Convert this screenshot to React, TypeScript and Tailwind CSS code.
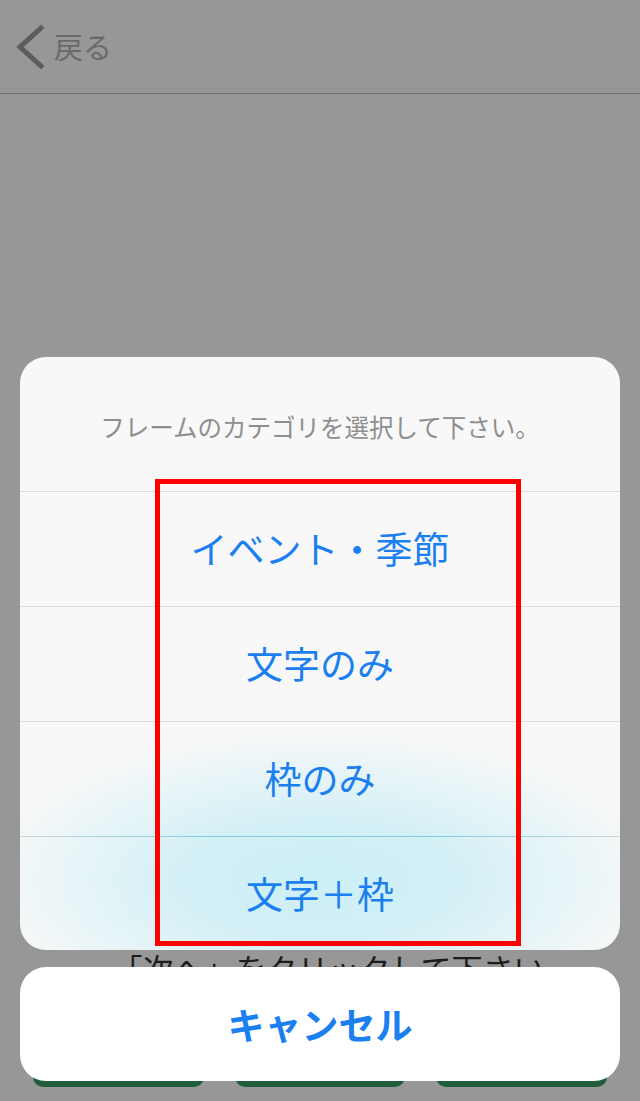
import React from "react";

const blue = "text-[#1a7ff0]";

const options = ["イベント・季節", "文字のみ", "枠のみ", "文字＋枠"];

const BackChevron = () => (
  <svg width="30" height="46" viewBox="0 0 30 46" fill="none">
    <path d="M26 4 L5 23 L26 42" stroke="#5c5c5c" strokeWidth="5" strokeLinecap="square" strokeLinejoin="miter" />
  </svg>
);

const App = () => {
  return (
    <div className="relative h-[1101px] w-full overflow-hidden bg-[#979797] font-['Noto_Sans_CJK_JP','Noto_Sans',sans-serif]">
      {/* dimmed page behind the sheet */}
      <div className="flex h-[94px] items-center gap-[9px] border-b border-[#6f6f6f] pl-[15px]">
        <BackChevron />
        <span className="text-[29px] leading-none text-[#6a6a6a]">戻る</span>
      </div>
      <div className="mt-[858px] pl-[16px] text-center text-[31px] leading-none text-[#1c1c1c]">
        「次へ」をクリックして下さい
      </div>
      <div className="mt-[24px] grid grid-cols-3 gap-[31px] px-[33px]">
        <div className="h-[80px] rounded-[10px] bg-[#215e3e]" />
        <div className="h-[80px] rounded-[10px] bg-[#215e3e]" />
        <div className="h-[80px] rounded-[10px] bg-[#215e3e]" />
      </div>

      {/* action sheet */}
      <div className="absolute inset-0 flex flex-col justify-end gap-[17px] px-[20px] pb-[20px]">
        <div className="relative overflow-hidden rounded-[26px] bg-[#f8f8f8]">
          <div className="pointer-events-none absolute left-[-40px] top-[373px] h-[300px] w-[680px] bg-[radial-gradient(closest-side,#cdeff6_0%,#d3f0f6_40%,#d3f0f600_100%)]" />
          <div className="relative flex h-[134px] items-center justify-center pt-[6px] text-[24.5px] leading-none text-[#8e8e8e]">
            フレームのカテゴリを選択して下さい。
          </div>
          {options.map((label, i) => (
            <div
              key={label}
              className={
                "relative flex items-center justify-center text-[37px] leading-none " +
                blue +
                (i === options.length - 1 ? " h-[114px]" : " h-[115px]")
              }
            >
              {i === options.length - 1 ? (
                <div className="absolute left-0 right-0 top-0 h-px bg-[linear-gradient(90deg,#d0d6da,#7ccfdc_30%,#7ccfdc_70%,#d0d6da)]" />
              ) : (
                <div className="absolute left-0 right-0 top-0 h-px bg-[#dcdcdc]" />
              )}
              {label}
            </div>
          ))}
        </div>
        <div className={"flex h-[114px] items-center justify-center rounded-[26px] bg-white text-[37px] font-bold leading-none " + blue}>
          キャンセル
        </div>
      </div>

      {/* red annotation frame */}
      <div className="pointer-events-none absolute left-[155px] top-[479px] h-[467px] w-[366px] border-[5px] border-[#ff0000]" />
    </div>
  );
};

export default App;
